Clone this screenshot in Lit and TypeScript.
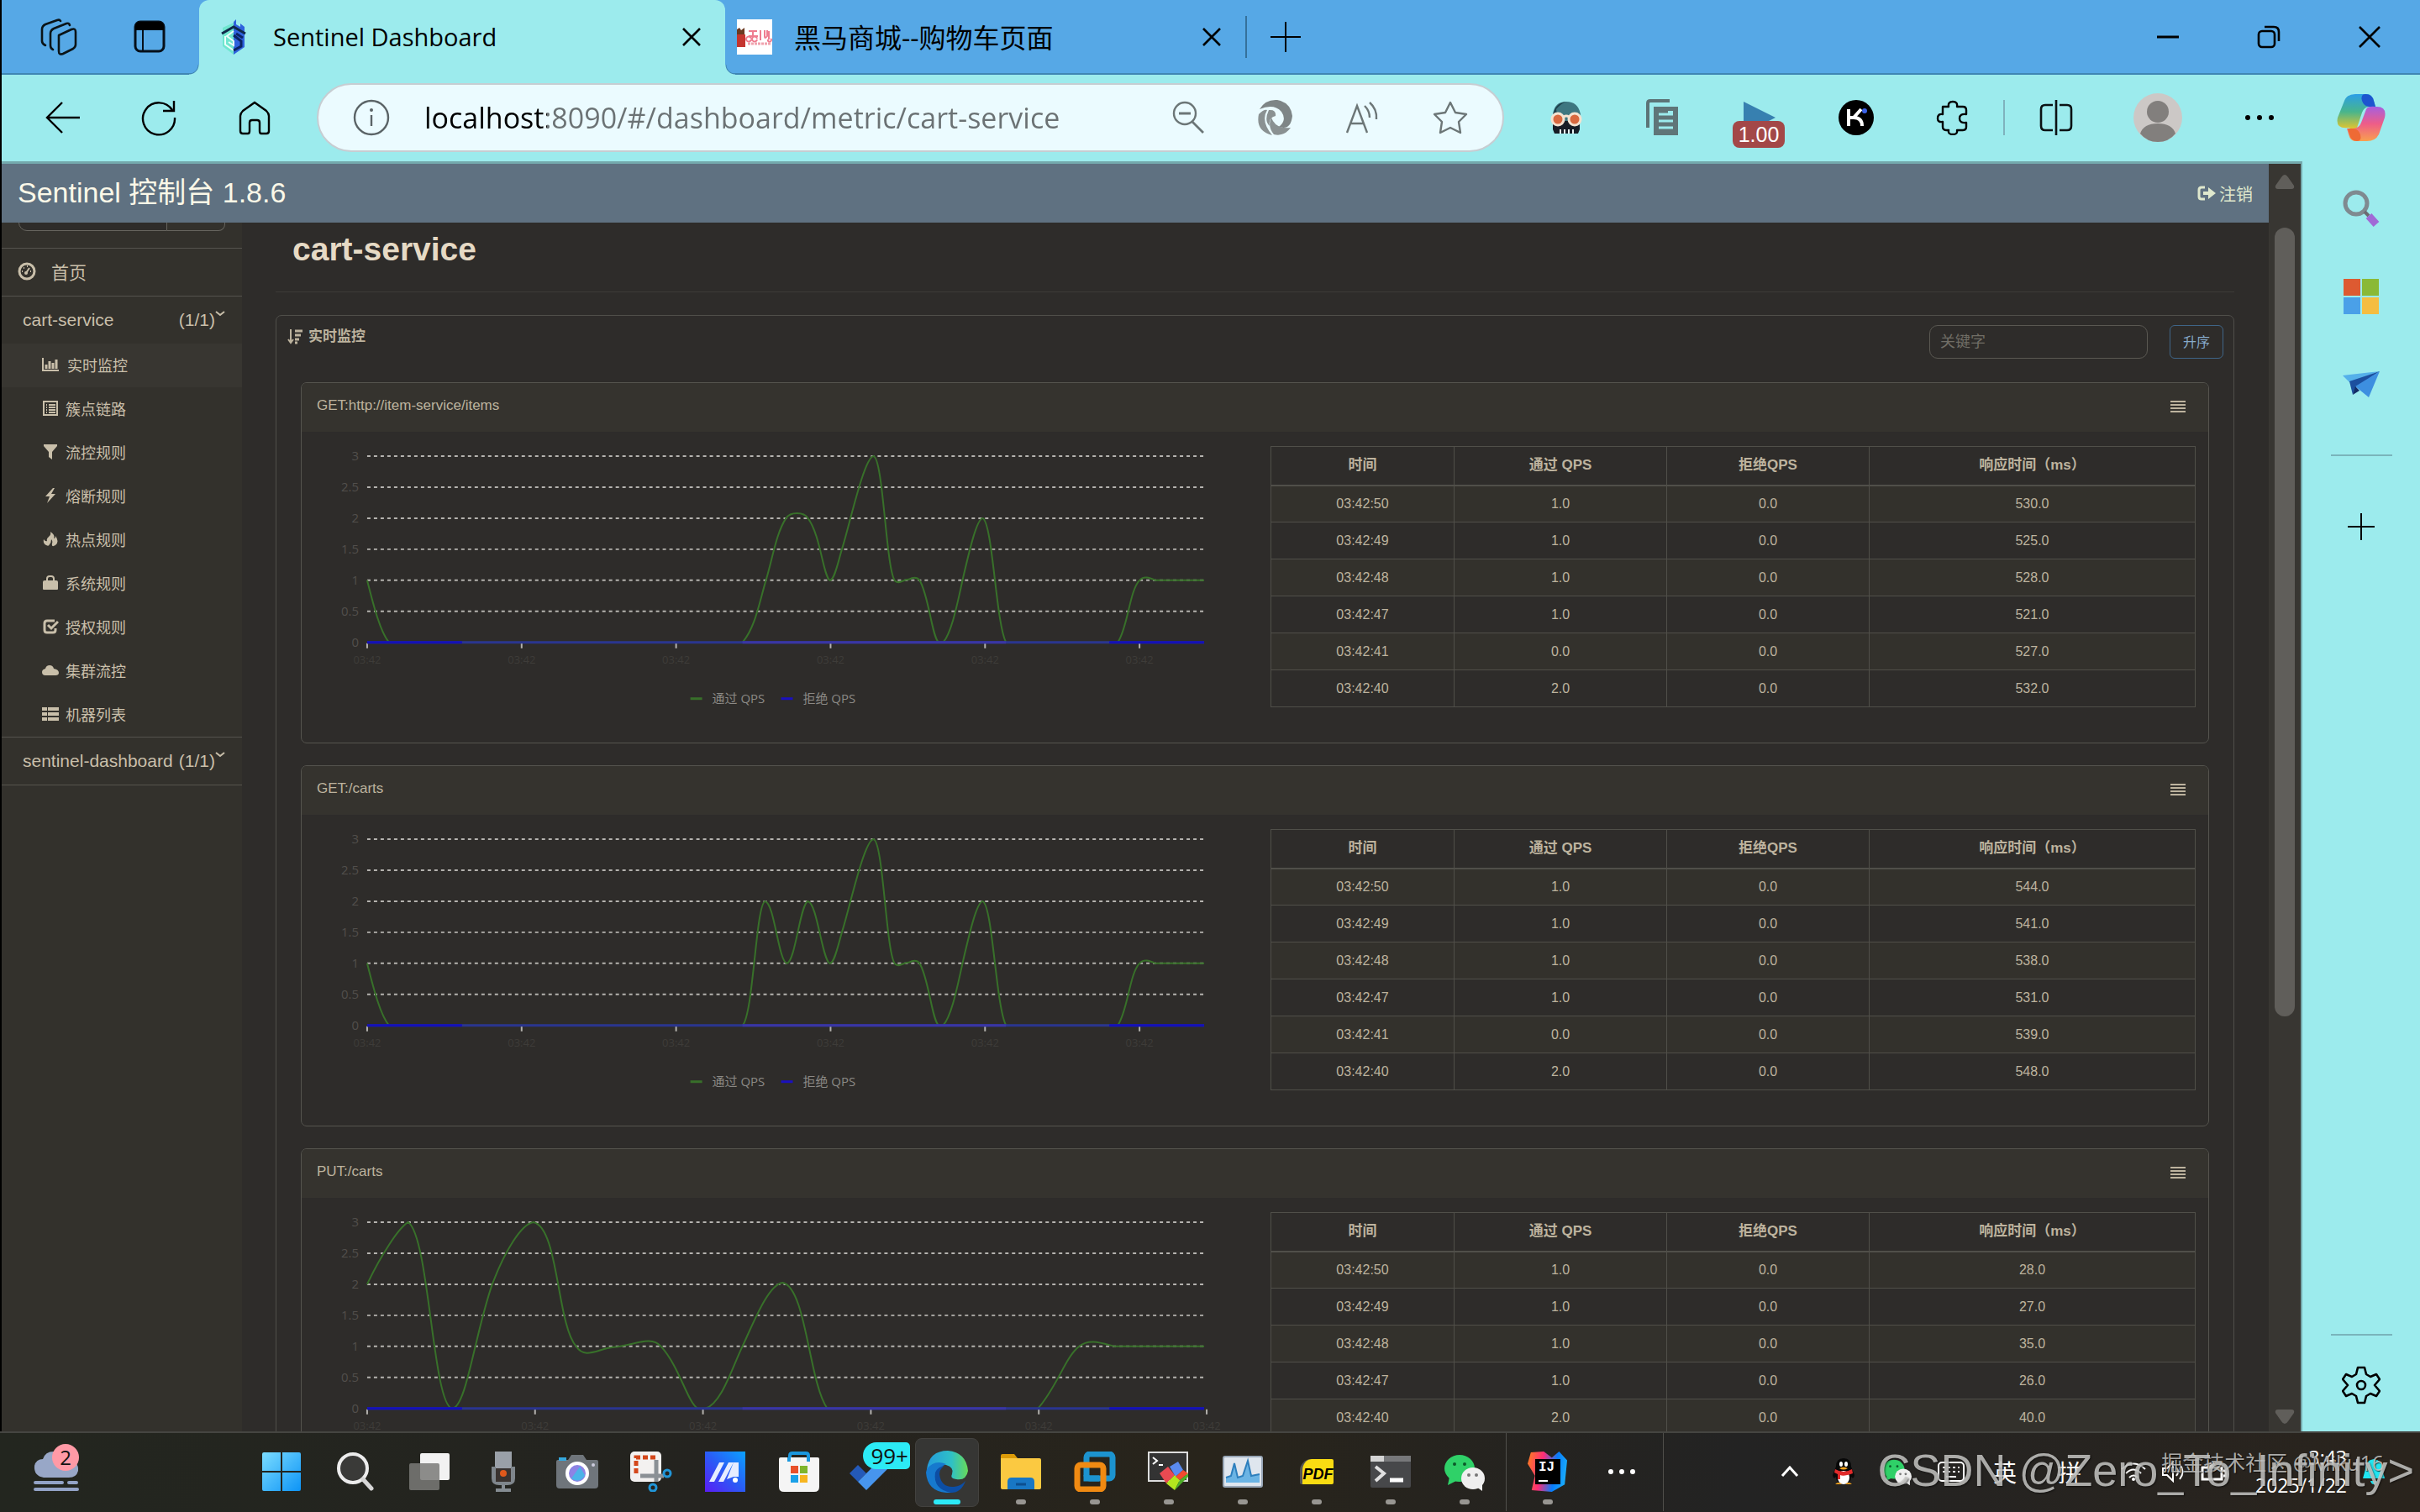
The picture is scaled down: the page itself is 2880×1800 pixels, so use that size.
import { LitElement, html, css, svg } from "lit";
import type { SVGTemplateResult } from "lit";
import { customElement, property } from "lit/decorators.js";

const pic = (w: number, h: number, body: SVGTemplateResult, vb = `0 0 ${w} ${h}`) =>
  html`<svg width=${w} height=${h} viewBox=${vb} fill="none" aria-hidden="true">${body}</svg>`;

/* ---------- browser icons ---------- */
const B = {
  workspaces: pic(44, 44, svg`<g stroke="#0b1418" stroke-width="2.6" stroke-linejoin="round" stroke-linecap="round"><path d="M22 20 L37 13 Q42 11 42 16 V31 Q42 34 39 36 L27 42 Q22 44 22 39 Z"/><path d="M15 37 Q12 36 12 32 V18 Q12 14 16 12 L31 6 Q34 5 35 8"/><path d="M6 32 Q2 30 2 27 V13 Q2 9 6 7 L20 2 Q23 1 24 3"/></g>`),
  tabs: pic(40, 40, svg`<rect x="3" y="2" width="34" height="35" rx="6" stroke="#06101a" stroke-width="3"/><path d="M3 12V8Q3 2 9 2H31Q37 2 37 8V12Z" fill="#000"/><path d="M12 12V37" stroke="#06101a" stroke-width="2"/>`),
  sentinel: pic(30, 42, svg`<path d="M15 3 L18 0 V6 L23 9 V5 L28 9 V33 L15 42Z" fill="#2f62dd"/><path d="M2 10 L15 4 V42 L2 32Z" fill="#6fe6cf"/><path d="M1 17 L15 9 L29 17" stroke="#10294a" stroke-width="3"/><path d="M5 20V30L15 37M15 14L7 20L15 26V31L9 27" stroke="#eafffb" stroke-width="2"/><path d="M15 19L24 26V32L15 37M18 17L26 22" stroke="#0c2464" stroke-width="3"/>`),
  close: pic(24, 24, svg`<path d="M2 2L22 22M22 2L2 22" stroke="#000" stroke-width="2.6"/>`),
  shop: pic(42, 42, svg`<rect width="42" height="42" fill="#fff"/><rect x="0" y="18" width="10" height="15" fill="#c5352f"/><path d="M0 12L3 10L5 13L9 10V18H0Z" fill="#6b3a22"/><path d="M14 14H24M19 14V20M14 20H25M17 23A3 3 0 1 0 17 24M24 23A3 3 0 1 0 24 24M28 13V25M33 13V20Q33 24 36 20V13M38 14V24M37 24A2 2 0 1 0 40 23" stroke="#ee7d90" stroke-width="2"/><path d="M13 29H41" stroke="#f0a2ad" stroke-width="3" stroke-dasharray="3 1"/>`),
  plus: pic(36, 36, svg`<path d="M18 0V36M0 18H36" stroke="#000" stroke-width="2"/>`),
  plusSmall: pic(32, 32, svg`<path d="M16 0V32M0 16H32" stroke="#000" stroke-width="2"/>`),
  min: pic(26, 26, svg`<path d="M0 13H26" stroke="#000" stroke-width="3"/>`),
  restore: pic(28, 28, svg`<rect x="2" y="7" width="19" height="19" rx="4" stroke="#000" stroke-width="2.6"/><path d="M9 2H20Q26 2 26 8V19" stroke="#000" stroke-width="2.6"/>`),
  winclose: pic(28, 28, svg`<path d="M2 2L26 26M26 2L2 26" stroke="#000" stroke-width="2.6"/>`),
  back: pic(44, 40, svg`<path d="M42 20H3M21 2L3 20L21 38" stroke="#000" stroke-width="2.4"/>`),
  reload: pic(44, 44, svg`<path d="M38 13A19 19 0 1 0 41 22M40 2V14H27" stroke="#000" stroke-width="2.4"/>`),
  home: pic(40, 42, svg`<path d="M3 19Q3 16 6 13L20 3L34 13Q37 16 37 19V37Q37 40 34 40H28Q26 40 26 37V27Q26 24 23 24H17Q14 24 14 27V37Q14 40 12 40H6Q3 40 3 37Z" stroke="#000" stroke-width="2.4"/>`),
  info: pic(44, 44, svg`<circle cx="22" cy="22" r="20" stroke="#5b6467" stroke-width="2.4"/><path d="M22 19V32" stroke="#5b6467" stroke-width="2.4"/><circle cx="22" cy="13" r="2" fill="#5b6467"/>`),
  zoomout: pic(40, 40, svg`<circle cx="16" cy="15" r="13" stroke="#6c7677" stroke-width="2.4"/><path d="M25 25L38 38M9 15H23" stroke="#6c7677" stroke-width="2.8"/>`),
  swirl: pic(44, 44, svg`<path d="M3 12Q10 0 24 1Q40 4 42 20Q40 38 26 33Q36 25 29 15Q20 5 3 12Z" fill="#7e8586"/><path d="M14 13Q23 12 22 20Q13 22 15 32Q8 26 14 13ZM2 18Q8 12 12 13Q4 26 18 43Q-2 38 2 18ZM17 22Q22 36 40 34Q32 45 20 42Q12 32 17 22Z" fill="#8a9192"/>`),
  read: pic(44, 40, svg`<path d="M3 38L15 6L27 38M7 27H23M24 6Q30 12 30 20M30 2Q39 10 38 22" stroke="#6c7677" stroke-width="2.4"/>`),
  star: pic(44, 42, svg`<path d="M22 3L28 15L41 17L32 26L34 39L22 33L10 39L12 26L3 17L16 15Z" stroke="#6c7677" stroke-width="2.4" stroke-linejoin="round"/>`),
  skull: pic(40, 40, svg`<path d="M4 24V16Q6 1 20 1Q34 1 37 16V24Z" fill="#3d7680"/><path d="M8 10Q14 3 20 1Q6 3 4 18V24H10Z" fill="#1c3f4a"/><path d="M4 24H36V34L34 39H6L4 34Z" fill="#171d26"/><circle cx="10" cy="22" r="7" fill="#d8693f" stroke="#f3e2d0" stroke-width="3"/><circle cx="30" cy="22" r="7" fill="#d8693f" stroke="#f3e2d0" stroke-width="3"/><path d="M17 19Q20 17 23 19" stroke="#f3e2d0" stroke-width="3"/><path d="M13 34V39M18 34V39M23 34V39M28 34V39" stroke="#e8f2f2" stroke-width="2"/>`),
  docs: pic(40, 44, svg`<path d="M2 34V5Q2 2 5 2H28" stroke="#5c7477" stroke-width="4"/><path d="M9 9H38V43H9Z" fill="#5f7578"/><path d="M15 18H32M15 26H32M15 34H32" stroke="#9cebed" stroke-width="3"/><path d="M26 14H32V18H26Z" fill="#9cebed"/>`),
  kimi: pic(42, 42, svg`<circle cx="21" cy="21" r="21" fill="#000"/><path d="M12 11V31M12 21H18Q28 21 28 31M18 21L27 11" stroke="#fff" stroke-width="4"/><circle cx="31" cy="13" r="3" fill="#3b62e8"/>`),
  puzzle: pic(40, 42, svg`<path d="M8 8H15Q14 2 20 2Q26 2 25 8H32Q36 8 36 12V17Q28 16 28 22Q28 28 36 27V32Q36 36 32 36H25Q26 41 20 41Q14 41 15 36H12Q8 36 8 32V26Q2 27 2 22Q2 16 8 17Z" stroke="#000" stroke-width="2.4" stroke-linejoin="round"/>`),
  split: pic(40, 42, svg`<path d="M16 6H7Q2 6 2 11V31Q2 36 7 36H16M24 6H33Q38 6 38 11V31Q38 36 33 36H24M20 0V42" stroke="#0b1214" stroke-width="2.6"/>`),
  avatar: pic(58, 58, svg`<circle cx="29" cy="29" r="29" fill="#ccc8c6"/><circle cx="29" cy="22" r="13" fill="#827f7d"/><path d="M8 48Q12 36 29 36Q46 36 50 48Q42 58 29 58Q16 58 8 48Z" fill="#827f7d"/>`),
  dots: pic(36, 8, svg`<circle cx="4" cy="4" r="3" fill="#000"/><circle cx="18" cy="4" r="3" fill="#000"/><circle cx="32" cy="4" r="3" fill="#000"/>`),
  copilot: pic(58, 56, svg`<defs><linearGradient id="ca" x1="0" y1="0" x2="0" y2="1"><stop stop-color="#2b9ee8"/><stop offset=".5" stop-color="#48b58c"/><stop offset="1" stop-color="#e8c52c"/></linearGradient><linearGradient id="cb" x1="0" y1="0" x2="0" y2="1"><stop stop-color="#a55fe0"/><stop offset=".5" stop-color="#ee5d88"/><stop offset="1" stop-color="#f8a04e"/></linearGradient></defs><path d="M22 0H36Q42 0 44 8L46 15H38Q32 16 30 22L24 40Q22 44 14 40Q-2 42 1 28L9 8Q12 0 22 0Z" fill="url(#ca)"/><path d="M34 0Q42 0 44 8L46 15H38Q32 14 30 8Q28 0 34 0Z" fill="#1d55cf"/><path d="M36 56H22Q16 56 14 48L12 41H20Q27 40 29 34L35 18Q37 14 46 15Q60 14 57 28L50 48Q46 56 36 56Z" fill="url(#cb)"/><path d="M24 56Q17 56 15 48L13 41H20Q26 42 28 48Q30 56 24 56Z" fill="#ee6a35"/>`),
  sidesearch: pic(44, 44, svg`<circle cx="16" cy="16" r="13" stroke="#7f8a90" stroke-width="5"/><path d="M26 26L31 31" stroke="#6c6a72" stroke-width="4"/><path d="M31 31L40 41" stroke="#a06ad6" stroke-width="9"/>`),
  ms: pic(42, 42, svg`<path d="M0 0H20V20H0Z" fill="#dd5a31"/><path d="M22 0H42V20H22Z" fill="#8ab936"/><path d="M0 22H20V42H0Z" fill="#4aa0e8"/><path d="M22 22H42V42H22Z" fill="#f5bd41"/>`),
  plane: pic(44, 32, svg`<path d="M0 5L44 0L8 13Z" fill="#55b0ea"/><path d="M8 12L44 0L15 20L12 28Z" fill="#1c4f9e"/><path d="M15 18L44 0L31 31Z" fill="#3d8fe0"/><path d="M12 28L15 18L20 23Z" fill="#132c66"/>`),
  gear: pic(46, 46, svg`<path d="M19 2H27L29 10L34 13L41 10L45 16L39 23L45 30L41 36L34 33L29 36L27 44H19L17 36L12 33L5 36L1 30L7 23L1 16L5 10L12 13L17 10Z" stroke="#000" stroke-width="2.6" stroke-linejoin="round"/><circle cx="23" cy="23" r="5" stroke="#000" stroke-width="2.6"/>`),
  up: pic(24, 18, svg`<path d="M12 1Q14 1 16 4L23 14Q24 18 20 18H4Q0 18 1 14L8 4Q10 1 12 1Z" fill="#605e5a"/>`),
  down: pic(24, 18, svg`<path d="M12 17Q14 17 16 14L23 4Q24 0 20 0H4Q0 0 1 4L8 14Q10 17 12 17Z" fill="#605e5a"/>`),
};

/* ---------- dashboard icons ---------- */
const D = {
  gauge: pic(22, 22, svg`<circle cx="11" cy="11" r="9" stroke="currentColor" stroke-width="3"/><path d="M10 13L14 7" stroke="currentColor" stroke-width="2"/><circle cx="10" cy="13" r="2" fill="currentColor"/><path d="M5 11H6M7 7H8M11 5H12M15 11H16" stroke="currentColor" stroke-width="2"/>`),
  chart: pic(20, 16, svg`<path d="M1 0V15H20" stroke="currentColor" stroke-width="2"/><path d="M5 13V8M9 13V4M13 13V6M17 13V2" stroke="currentColor" stroke-width="3"/>`),
  listalt: pic(18, 18, svg`<rect x="1" y="1" width="16" height="16" stroke="currentColor" stroke-width="2"/><path d="M4 5H5M7 5H15M4 8H5M7 8H15M4 11H5M7 11H15M4 14H5M7 14H15" stroke="currentColor" stroke-width="2"/>`),
  filter: pic(18, 18, svg`<path d="M1 0H17V2L11 9V18L7 15V9L1 2Z" fill="currentColor"/>`),
  bolt: pic(18, 18, svg`<path d="M12 0L3 10H8L5 18L15 7H10L14 0Z" fill="currentColor"/>`),
  fire: pic(18, 18, svg`<path d="M9 0Q15 4 13 8Q15 8 15 5Q20 12 15 16Q10 19 11 14Q12 11 10 9Q10 13 8 15Q7 18 4 16Q0 14 1 9Q3 12 5 11Q4 8 7 6Q10 4 9 0Z" fill="currentColor"/>`),
  bag: pic(18, 18, svg`<path d="M0 8Q0 6 2 6H16Q18 6 18 8V16Q18 17 17 17H1Q0 17 0 16Z" fill="currentColor"/><path d="M5 8V4Q5 1 8 1H10Q13 1 13 4V8" stroke="currentColor" stroke-width="2"/>`),
  check: pic(19, 18, svg`<path d="M14 2H5Q2 2 2 5V13Q2 16 5 16H12Q15 16 15 13V11" stroke="currentColor" stroke-width="3"/><path d="M6 7L10 11L18 3" stroke="currentColor" stroke-width="3"/>`),
  cloud: pic(20, 14, svg`<path d="M4 13Q0 13 0 9Q0 6 4 5Q5 1 9 1Q13 1 14 5Q20 6 20 10Q20 13 16 13Z" fill="currentColor"/>`),
  thlist: pic(20, 18, svg`<path d="M0 1H6V5H0ZM7 1H20V5H7ZM0 7H6V11H0ZM7 7H20V11H7ZM0 13H6V17H0ZM7 13H20V17H7Z" fill="currentColor"/>`),
  chevron: pic(12, 10, svg`<path d="M1 2L6 6L11 2" stroke="currentColor" stroke-width="2"/>`),
  logout: pic(22, 20, svg`<path d="M9 3H5Q2 3 2 6V14Q2 17 5 17H9" stroke="currentColor" stroke-width="3"/><path d="M7 8H13V3L22 10L13 17V12H7Z" fill="currentColor"/>`),
  sort: pic(18, 18, svg`<path d="M4 0V15M1 12L4 16L7 12" stroke="currentColor" stroke-width="2"/><path d="M9 2H18M9 7H16M9 12H14M9 16H12" stroke="currentColor" stroke-width="3"/>`),
  bars: pic(18, 14, svg`<path d="M0 1H18M0 5H18M0 9H18M0 13H18" stroke="currentColor" stroke-width="2"/>`),
};

/* ---------- taskbar icons ---------- */
const wechat = svg`<ellipse cx="18" cy="20" rx="18" ry="16" fill="#2fd168"/><path d="M6 30L4 40L14 35Z" fill="#2fd168"/><circle cx="12" cy="15" r="2" fill="#0c5a2a"/><circle cx="24" cy="15" r="2" fill="#0c5a2a"/><ellipse cx="34" cy="32" rx="14" ry="13" fill="#efefef"/><path d="M38 42L45 47L45 38Z" fill="#efefef"/><circle cx="29" cy="28" r="2" fill="#777"/><circle cx="38" cy="28" r="2" fill="#777"/>`;
const T = {
  weather: pic(54, 56, svg`<path d="M12 40Q0 38 1 26Q3 18 11 18Q14 8 26 9Q38 10 41 20Q54 20 53 32Q51 40 42 40Z" fill="#98a7c7"/><path d="M2 46H34M42 46H51M2 54H52" stroke="#93a3c6" stroke-width="4" stroke-linecap="round"/>`),
  win: pic(46, 46, svg`<defs><linearGradient id="wg" x1="0" y1="0" x2="1" y2="1"><stop stop-color="#7bdcff"/><stop offset="1" stop-color="#0d94f6"/></linearGradient></defs><path d="M0 2Q0 0 2 0H22V22H0ZM24 0H44Q46 0 46 2V22H24ZM0 24H22V46H2Q0 46 0 44ZM24 24H46V44Q46 46 44 46H24Z" fill="url(#wg)"/>`),
  search: pic(44, 46, svg`<circle cx="19" cy="19" r="17" fill="#3a3a38" stroke="#ececec" stroke-width="4"/><path d="M31 32L41 43" stroke="#d6d6d6" stroke-width="5" stroke-linecap="round"/>`),
  view: pic(48, 44, svg`<rect x="13" y="0" width="35" height="32" rx="2" fill="#f2f2f2"/><rect x="0" y="12" width="36" height="32" rx="2" fill="#7a7a78" opacity=".85"/>`),
  mic: pic(30, 48, svg`<rect x="5" y="0" width="20" height="24" fill="#9aa0a8"/><path d="M1 18H6V34H24V18H29V32Q29 40 20 40H10Q1 40 1 32Z" fill="#7f868c"/><rect x="6" y="20" width="18" height="16" fill="#3a3330"/><circle cx="15" cy="26" r="4" fill="#e0591c"/><path d="M15 40V45M6 46H24" stroke="#858c92" stroke-width="4"/>`),
  camera: pic(50, 40, svg`<path d="M0 8Q0 6 2 6H14L18 0H32L36 6H48Q50 6 50 8V36Q50 40 46 40H4Q0 40 0 36Z" fill="#6f757b"/><rect x="3" y="3" width="9" height="4" fill="#35a8dd"/><circle cx="25" cy="22" r="12" fill="#8d83e4" stroke="#fff" stroke-width="4"/><path d="M18 28A10 10 0 0 0 34 24L28 14Z" fill="#4bb3e8"/><rect x="42" y="10" width="4" height="4" rx="2" fill="#ccd"/>`),
  snip: pic(50, 48, svg`<rect width="37" height="36" rx="5" fill="#f3f1f0"/><path d="M7 26V7H30" stroke="#d4471a" stroke-width="5" stroke-dasharray="6 3"/><path d="M31 10V36M12 29H40" stroke="#8b9095" stroke-width="5"/><circle cx="44" cy="26" r="4" stroke="#2196d8" stroke-width="3"/><circle cx="27" cy="43" r="4" stroke="#2196d8" stroke-width="3"/>`),
  mi: pic(48, 48, svg`<defs><linearGradient id="mg" x1="0" y1="1" x2="1" y2="0"><stop stop-color="#5b1cf4"/><stop offset=".5" stop-color="#2a5cf6"/><stop offset="1" stop-color="#0ba2ff"/></linearGradient></defs><rect width="48" height="48" fill="url(#mg)"/><path d="M5 36L17 13H23L11 36ZM16 36L28 13H34L22 36ZM34 13H40V30H34L26 33Z" fill="#e6ecff"/><circle cx="36" cy="34" r="3" fill="#fff"/>`),
  store: pic(48, 48, svg`<path d="M13 12V5Q13 2 16 2H32Q35 2 35 5V12" stroke="#1b97dd" stroke-width="4"/><path d="M0 9Q0 7 2 7H46Q48 7 48 9V42Q48 48 42 48H6Q0 48 0 42Z" fill="#f5f5f5"/><path d="M12 7V12M35 7V12" stroke="#1b97dd" stroke-width="4"/><rect x="14" y="17" width="9" height="9" fill="#e8502a"/><rect x="25" y="17" width="9" height="9" fill="#7fb52e"/><rect x="14" y="28" width="9" height="9" fill="#1aa0e8"/><rect x="25" y="28" width="9" height="9" fill="#f7b520"/>`),
  todo: pic(56, 44, svg`<path d="M0 24L10 14L20 24L10 34Z" fill="#2459b8"/><path d="M10 34L42 2L52 12L20 44Z" fill="#4795ee"/>`),
  edge: pic(50, 50, svg`<defs><linearGradient id="eg" x1="0" y1="0" x2="1" y2="0"><stop stop-color="#239bdc"/><stop offset=".6" stop-color="#2fc0c6"/><stop offset="1" stop-color="#68da58"/></linearGradient></defs><path d="M1 22Q4 0 26 0Q48 2 50 24Q48 36 36 34Q28 33 31 28Q34 20 24 17Q10 14 1 24Z" fill="url(#eg)"/><path d="M1 22Q10 10 24 16Q14 20 15 31Q18 44 32 50Q2 52 0 26Z" fill="#1679ce"/><path d="M16 28Q18 44 33 43Q42 42 47 36Q42 50 30 50Q8 46 11 26Q14 19 22 18Q16 22 16 28Z" fill="#0d4ea4"/>`),
  folder: pic(48, 42, svg`<path d="M0 2Q0 0 2 0H16L20 5H0Z" fill="#dc9b08"/><path d="M0 5H46Q48 5 48 7V40Q48 42 46 42H2Q0 42 0 40Z" fill="#fbc941"/><path d="M8 42V33Q8 28 13 28H35Q40 28 40 33V42Z" fill="#1877c4"/><path d="M18 36H30" stroke="#0c4f8f" stroke-width="3"/>`),
  vm: pic(50, 48, svg`<rect x="15" y="3" width="31" height="29" rx="4" stroke="#1c93cf" stroke-width="7"/><rect x="4" y="16" width="31" height="29" rx="4" stroke="#f08a12" stroke-width="7"/><path d="M15 28V32H30" stroke="#1c93cf" stroke-width="7"/>`),
  moba: pic(50, 48, svg`<rect x="1" y="1" width="46" height="34" fill="#333" stroke="#ddd" stroke-width="2"/><path d="M6 7L11 11L6 15M13 16H18" stroke="#fff" stroke-width="2"/><path d="M14 26L24 18L32 28L22 38Z" fill="#e94a52"/><path d="M26 18L36 12L42 22L33 30Z" fill="#5a8bf0"/><path d="M22 38L32 28L38 34L32 46Z" fill="#b4e61e"/><path d="M33 30L42 22L48 26L38 34Z" fill="#f24a30"/><path d="M38 34L48 26V30L32 46Z" fill="#4fae28"/>`),
  monitor: pic(48, 38, svg`<rect x="1" y="1" width="46" height="36" rx="2" fill="#dfe6ee" stroke="#9aa8b8" stroke-width="2"/><path d="M4 32V26L10 24L14 9L18 26L24 24L30 6L34 24L44 22V32Z" fill="#6bb4e4"/><path d="M4 26L10 24L14 9L18 26L24 24L30 6L34 24L44 22" stroke="#2d7fbd" stroke-width="2"/>`),
  terminal: pic(48, 38, svg`<rect width="48" height="38" rx="2" fill="#47484a"/><path d="M0 0H48V7H0Z" fill="#77787a"/><path d="M0 0H16V7H0Z" fill="#d4d4d4"/><path d="M6 13L16 21L6 30" stroke="#e0e0e0" stroke-width="4"/><path d="M23 29H39" stroke="#fff" stroke-width="5"/>`),
  wechat: pic(48, 48, wechat),
  wechatSmall: pic(34, 34, wechat, "0 0 48 48"),
  dots: pic(34, 8, svg`<circle cx="4" cy="4" r="3" fill="#fff"/><circle cx="17" cy="4" r="3" fill="#fff"/><circle cx="30" cy="4" r="3" fill="#fff"/>`),
  caret: pic(22, 14, svg`<path d="M2 12L11 2L20 12" stroke="#fff" stroke-width="3"/>`),
  qq: pic(26, 32, svg`<path d="M4 10Q4 0 13 0Q22 0 22 10L26 20Q25 26 22 22Q22 30 13 30Q4 30 4 22Q1 26 0 20Z" fill="#080808"/><ellipse cx="13" cy="23" rx="7" ry="8" fill="#fff"/><path d="M3 13Q13 19 23 13L24 18Q13 22 9 20V25H6V19L2 17Z" fill="#e02a2a"/><ellipse cx="10" cy="7" rx="2" ry="3" fill="#fff"/><ellipse cx="16" cy="7" rx="2" ry="3" fill="#fff"/><path d="M8 12Q13 9 18 12Q13 15 8 12ZM3 31Q7 27 11 31ZM15 31Q19 27 23 31Z" fill="#f6a31c"/>`),
  keyboard: pic(34, 26, svg`<rect x="2" y="2" width="30" height="22" rx="4" stroke="#fff" stroke-width="2"/><path d="M7 8H27M7 13H27" stroke="#fff" stroke-width="2" stroke-dasharray="3 3"/><path d="M11 19H23" stroke="#fff" stroke-width="2"/>`),
  wifi: pic(32, 24, svg`<path d="M2 9Q16 -4 30 9M7 14Q16 5 25 14M11 19Q16 14 21 19" stroke="#fff" stroke-width="2"/><circle cx="16" cy="21" r="2" fill="#fff"/>`),
  volume: pic(28, 26, svg`<path d="M2 9H7L14 2V24L7 17H2ZM18 8Q22 13 18 18M22 4Q29 13 22 22" stroke="#fff" stroke-width="2"/>`),
  ide: pic(32, 26, svg`<path d="M2 8H25V22H2ZM27 12H30V18H27" stroke="#fff" stroke-width="3"/><path d="M12 2L18 8H6Z" fill="#fff"/>`),
  bell: pic(28, 32, svg`<path d="M14 1Q24 2 24 13L27 24H1L4 13Q4 2 14 1Z" fill="#20e6f2"/><path d="M10 27H18Q17 31 14 31Q11 31 10 27Z" fill="#20e6f2"/>`),
};

/* ---------- data ---------- */
interface Metric { name: string; path: string; tick: number; rows: string[][]; }
const times = ["03:42:50", "03:42:49", "03:42:48", "03:42:47", "03:42:41", "03:42:40"];
const pass = ["1.0", "1.0", "1.0", "1.0", "0.0", "2.0"];
const mk = (rt: string[], t = times, p = pass) => rt.map((r, i) => [t[i], p[i], "0.0", r]);
const tail = "C557 148 561 125 567 106C575 80 592 2 603 0C615 2 618 138 629 149C634 153 638 147 645 147C651 144 655 144 658 148C669 165 673 218 681 222H686C697 210 704 170 711 140C718 110 726 76 733 74C745 78 749 200 761 222H894C906 205 908 160 920 148C925 142 932 145 939 148H997";
const metrics: Metric[] = [
  { name: "GET:http://item-service/items", tick: 184, rows: mk(["530.0", "525.0", "528.0", "521.0", "527.0", "532.0"]),
    path: "M0 148C8 180 16 210 26 222H447C462 205 467 175 475 148C483 122 487 92 499 74C504 66 520 66 525 74C540 94 543 142 551 148" + tail },
  { name: "GET:/carts", tick: 184, rows: mk(["544.0", "541.0", "538.0", "531.0", "539.0", "548.0"]),
    path: "M0 148C8 180 16 210 26 222H447C460 210 463 78 474 74C485 76 490 146 500 148C510 146 516 76 525 74C536 76 542 144 551 148" + tail },
  { name: "PUT:/carts", tick: 200, rows: mk(["28.0", "27.0", "35.0", "26.0", "40.0"], ["03:42:50", "03:42:49", "03:42:48", "03:42:47", "03:42:40"], ["1.0", "1.0", "1.0", "1.0", "2.0"]),
    path: "M0 74C16 40 38 6 49 0C74 18 78 216 101 222C118 222 128 134 149 74C164 34 184 2 198 0C228 6 226 122 249 148C259 164 275 151 293 149C318 147 338 134 350 148C372 172 382 216 394 222H403C422 216 434 175 447 148C461 118 478 74 495 72C523 78 526 190 548 222H799C822 196 832 160 848 148C860 138 875 144 890 148H997" },
];
const menu: [string, unknown][] = [
  ["实时监控", D.chart], ["簇点链路", D.listalt], ["流控规则", D.filter], ["熔断规则", D.bolt], ["热点规则", D.fire],
  ["系统规则", D.bag], ["授权规则", D.check], ["集群流控", D.cloud], ["机器列表", D.thlist],
];

const reset = css`
  * { box-sizing: border-box; }
  svg { display: block; flex: none; }
  button { background: none; border: 0; padding: 0; margin: 0; font: inherit; color: inherit; display: flex; align-items: center; justify-content: center; }
  a { color: inherit; text-decoration: none; }
  input { font: inherit; min-width: 0; }
`;

@customElement("metric-card")
class MetricCard extends LitElement {
  @property({ attribute: false }) metric!: Metric;
  static styles = [reset, css`
    :host { display: block; border: 1px solid #55544e; border-radius: 7px; overflow: hidden; color: #bdb39e; min-height: 430px; background: #2e2c2a; }
    .head { display: flex; justify-content: space-between; height: 58px; padding: 0 27px 3px 18px; background: #35332e; font-size: 17px; line-height: 54px; }
    .body { display: grid; grid-template-columns: 1153fr 1101fr; padding-right: 15px; align-items: start; }
    .chart { width: 100%; height: auto; font-family: "Open Sans", "Noto Sans CJK SC", sans-serif; }
    .axis { font-size: 15px; fill: #524f4c; }
    .time { font-size: 13px; fill: #3e3c39; }
    .legend { font-size: 15px; fill: #8b8985; }
    table { width: 100%; border-collapse: collapse; table-layout: fixed; margin-top: 17px; font-size: 16px; text-align: center; }
    th, td { border: 1px solid #504f49; padding: 0; height: 44px; line-height: 22px; }
    th { font-size: 17px; border-bottom-width: 2px; height: 46px; }
    tbody tr:nth-child(odd) { background: #33312c; }
    .c1 { width: 218px; } .c2 { width: 253px; } .c3 { width: 241px; }
  `];
  render() {
    const m = this.metric;
    const ticks = [0, 1, 2, 3, 4, 5].map((i) => i * m.tick);
    return html`
      <div class="head"><span>${m.name}</span><button aria-label="菜单">${D.bars}</button></div>
      <div class="body">
        <svg class="chart" viewBox="0 0 1154 370" role="img" aria-label="QPS">
          ${[0, 1, 2, 3, 4, 5, 6].map((i) => svg`
            <text class="axis" x="68" y=${34 + i * 37} text-anchor="end">${3 - i * 0.5}</text>
            ${i < 6 ? svg`<path d="M78 ${29 + i * 37}H1075" stroke="#b5b3af" stroke-width="2" stroke-dasharray="4 4"/>` : ""}`)}
          ${ticks.map((t) => svg`<path d="M${78 + t} 252V258" stroke="#b5b3af" stroke-width="2"/><text class="time" x=${78 + t} y="276" text-anchor="middle">03:42</text>`)}
          <g transform="translate(78 29)" fill="none">
            <path d=${m.path} stroke="#38702a" stroke-width="2"/>
            <path d="M0 222H997" stroke="#2a3590" stroke-width="3"/>
            <path d="M447 222H761" stroke="#3a36a4" stroke-width="3"/>
            <path d="M0 222H113M884 222H997" stroke="#1410b8" stroke-width="3"/>
          </g>
          <path d="M463 318H477" stroke="#38702a" stroke-width="3"/>
          <text class="legend" x="489" y="323">通过 QPS</text>
          <path d="M571 318H585" stroke="#1a10c0" stroke-width="3"/>
          <text class="legend" x="597" y="323">拒绝 QPS</text>
        </svg>
        <table>
          <thead><tr><th class="c1">时间</th><th class="c2">通过 QPS</th><th class="c3">拒绝QPS</th><th>响应时间（ms）</th></tr></thead>
          <tbody>${m.rows.map((r) => html`<tr>${r.map((c) => html`<td>${c}</td>`)}</tr>`)}</tbody>
        </table>
      </div>`;
  }
}

@customElement("sentinel-page")
class SentinelPage extends LitElement {
  static styles = [reset, css`
    :host { display: flex; flex-direction: column; min-width: 0; min-height: 0; flex: 1; background: #2e2c2a; font-family: "Liberation Sans", "Noto Sans CJK SC", sans-serif; color: #c9bfaa; overflow: hidden; }
    .top { flex: none; height: 70px; background: #5f7181; display: flex; align-items: center; justify-content: space-between; padding: 0 19px 0 19px; color: #fbf8e8; }
    .brand { font-size: 34px; line-height: 40px; padding-bottom: 2px; }
    .logout { display: flex; align-items: center; gap: 4px; font-size: 20px; color: #dfe8cd; }
    .cols { flex: 1; min-height: 0; display: flex; }
    nav { flex: none; width: 286px; background: #33312c; }
    .search { display: flex; align-items: flex-end; height: 10px; margin: 0 20px 20px; overflow: hidden; }
    .search input { flex: 1; height: 40px; border: 1px solid #66645e; border-radius: 0 0 0 10px; background: #2e2c2a; }
    .search button { width: 69px; height: 40px; border: 1px solid #66645e; border-left: 0; border-radius: 0 0 8px 0; }
    .row { display: flex; align-items: center; height: 57px; border-top: 1px solid #55534d; font-size: 21px; padding: 0 20px 1px 25px; }
    .row.last { border-bottom: 1px solid #55534d; height: 58px; }
    .row.homepage { padding: 0 20px 3px 19px; gap: 18px; }
    .count { margin-left: auto; display: flex; }
    .sub { display: flex; align-items: center; gap: 8px; height: 52px; padding: 0 0 3px 48px; font-size: 18px; }
    .sub .ico { width: 20px; display: flex; justify-content: center; }
    .sub.on { background: #383631; gap: 10px; }
    main { flex: 1; min-width: 0; padding: 0 41px 0 40px; overflow: hidden; }
    h1 { margin: 0 0 27px; padding: 10px 20px 28px; font-size: 39px; line-height: 44px; color: #e6dac5; border-bottom: 1px solid #3d3b38; }
    .panel { border: 1px solid #504f4a; border-radius: 7px; padding-bottom: 26px; }
    .bar { display: flex; align-items: flex-start; padding: 11px 12px 28px 13px; }
    .label { display: flex; align-items: center; gap: 7px; font-size: 17px; line-height: 28px; font-weight: bold; flex: 1; color: #bdb39e; }
    .key { width: 260px; height: 40px; background: none; border: 1px solid #5a5852; border-radius: 10px; padding: 0 12px; font-size: 18px; color: #c9bfaa; margin-right: 26px; }
    .key::placeholder { color: #716e66; opacity: 1; }
    .asc { width: 64px; height: 40px; padding-bottom: 2px; border: 1px solid #3f6587; border-radius: 6px; color: #86aacb; font-size: 16px; }
    .cards { display: flex; flex-direction: column; gap: 26px; padding: 0 29px; }
  `];
  render() {
    return html`
      <header class="top"><span class="brand">Sentinel 控制台 1.8.6</span><a class="logout" href="#">${D.logout}注销</a></header>
      <div class="cols">
        <nav>
          <div class="search"><input aria-label="应用名"><button aria-label="搜索"></button></div>
          <a class="row homepage" href="#">${D.gauge}<span>首页</span></a>
          <a class="row" href="#"><span>cart-service</span><span class="count">(1/1)${D.chevron}</span></a>
          ${menu.map(([t, i], k) => html`<a class="sub ${k === 0 ? "on" : ""}" href="#"><span class="ico">${i}</span>${t}</a>`)}
          <a class="row last" href="#"><span>sentinel-dashboard</span><span class="count">(1/1)${D.chevron}</span></a>
        </nav>
        <main>
          <h1>cart-service</h1>
          <section class="panel">
            <div class="bar"><span class="label">${D.sort}实时监控</span><input class="key" placeholder="关键字" aria-label="关键字"><button class="asc">升序</button></div>
            <div class="cards">${metrics.map((m) => html`<metric-card .metric=${m}></metric-card>`)}</div>
          </section>
        </main>
      </div>`;
  }
}

@customElement("task-bar")
class TaskBar extends LitElement {
  static styles = [reset, css`
    :host { display: flex; align-items: center; position: relative; flex: none; height: 96px; border-top: 2px solid #454541; background: linear-gradient(90deg, #23261f, #24231f 30%, #28241b 50%, #232323 72%, #2a241d); font-family: "Open Sans", "Noto Sans CJK SC", sans-serif; color: #fff; overflow: hidden; padding-bottom: 2px; }
    .weather { position: relative; margin-left: 40px; width: 54px; padding-bottom: 10px; }
    .badge { position: absolute; background: #ff9aa6; color: #111; }
    .two { right: 0; top: 0; width: 32px; height: 32px; border-radius: 16px; font-size: 24px; line-height: 32px; text-align: center; }
    .apps { display: flex; margin-left: 197px; }
    .apps button { position: relative; width: 88px; height: 94px; }
    .apps .on::before { content: ""; position: absolute; left: 6px; top: 7px; width: 74px; height: 80px; border-radius: 8px; background: #363634; border: 1px solid #43423f; z-index: -1; }
    .apps .on { z-index: 0; }
    .run::after { content: ""; position: absolute; left: 38px; bottom: 8px; width: 12px; height: 6px; border-radius: 3px; background: #989692; }
    .on::after { content: ""; position: absolute; left: 28px; bottom: 8px; width: 32px; height: 6px; border-radius: 3px; background: #2ce9f7; }
    .count { right: 0; top: 12px; height: 32px; padding: 0 2px 0 9px; border-radius: 16px 5px 5px 16px; background: #2ceaf5; font-size: 26px; line-height: 32px; }
    .boxed { display: flex; align-items: center; border: solid #504f4b; border-width: 0 1px; margin-left: 5px; padding: 0 5px; }
    .boxed button { position: relative; width: 88px; height: 94px; }
    .pdf { width: 40px; height: 30px; background: #f9dc12; border-radius: 14px 2px 2px 2px; border-left: 3px solid #555; color: #000; font: italic bold 18px/36px "Liberation Sans", sans-serif; text-align: center; }
    .ij { width: 48px; height: 48px; display: grid; place-items: center; background: linear-gradient(100deg, #fc801d, #fe2c78 35%, #087cfa 65%, #21c0fb); clip-path: polygon(8% 2%, 40% 0, 60% 15%, 78% 0, 98% 22%, 92% 82%, 60% 100%, 10% 96%, 18% 60%, 0 30%); }
    .ij span { width: 30px; height: 30px; background: linear-gradient(#fff, #fff) 4px 25px / 11px 2px no-repeat #000; font: bold 16px/20px "Liberation Mono", monospace; padding: 0 4px; text-align: left; }
    .tray { display: flex; align-items: center; margin-left: auto; padding-right: 41px; }
    .tray button { font-size: 28px; height: 94px; }
    .w64 { width: 64px; } .w90 { width: 90px; } .w62 { width: 62px; } .w32 { width: 32px; } .w66 { width: 66px; }
    .clock { width: 125px; text-align: right; font-size: 23px; line-height: 33px; }
    .bell { margin-left: 18px; }
    .mark { position: absolute; right: 7px; top: 6px; font: 54px/76px "Liberation Sans", sans-serif; color: rgba(205, 205, 203, .82); text-shadow: 1px 1px 2px #0008; white-space: nowrap; pointer-events: none; }
    .mark2 { position: absolute; right: 43px; top: 17px; font-size: 25px; line-height: 36px; color: rgba(205, 205, 203, .82); text-shadow: 1px 1px 1px #000a; white-space: nowrap; pointer-events: none; }
  `];
  render() {
    const plain: [string, unknown][] = [["开始", T.win], ["搜索", T.search], ["任务视图", T.view], ["录音机", T.mic], ["相机", T.camera], ["截图", T.snip], ["应用", T.mi], ["商店", T.store]];
    const running: [string, unknown][] = [["文件", T.folder], ["虚拟机", T.vm], ["终端", T.moba], ["监视器", T.monitor], ["文档", html`<span class="pdf">PDF</span>`], ["命令行", T.terminal], ["微信", T.wechat]];
    return html`
      <button class="weather" aria-label="天气">${T.weather}<span class="badge two">2</span></button>
      <div class="apps">
        ${plain.map(([l, i]) => html`<button aria-label=${l}>${i}</button>`)}
        <button aria-label="待办">${T.todo}<span class="badge count">99+</span></button>
        <button class="on" aria-label="浏览器">${T.edge}</button>
        ${running.map(([l, i]) => html`<button class="run" aria-label=${l}>${i}</button>`)}
      </div>
      <div class="boxed"><button class="run" aria-label="IDE"><span class="ij"><span>IJ</span></span></button><button aria-label="更多">${T.dots}</button></div>
      <div class="tray">
        <button class="w64" aria-label="展开">${T.caret}</button>
        <button class="w64" aria-label="QQ">${T.qq}</button>
        <button class="w64" aria-label="微信">${T.wechatSmall}</button>
        <button class="w64" aria-label="键盘">${T.keyboard}</button>
        <button class="w64">英</button>
        <button class="w90">拼</button>
        <button class="w62" aria-label="网络">${T.wifi}</button>
        <button class="w32" aria-label="音量">${T.volume}</button>
        <button class="w66" aria-label="电池">${T.ide}</button>
        <div class="clock">3:43<br>2025/1/22</div>
        <button class="bell" aria-label="通知">${T.bell}</button>
      </div>
      <span class="mark2">掘金技术社区 @Miku16</span>
      <span class="mark">CSDN @Zero_To_Infinity&gt;</span>`;
  }
}

@customElement("app-root")
class AppRoot extends LitElement {
  static styles = [reset, css`
    :host { display: flex; flex-direction: column; height: 100vh; overflow: hidden; background: #9cebed; font-family: "Open Sans", "Noto Sans CJK SC", sans-serif; color: #000; }
    .window { flex: 1; min-height: 0; display: flex; flex-direction: column; border-left: 2px solid #000; }
    .tabs { flex: none; display: flex; height: 89px; background: #56a8e6; border-bottom: 2px solid #3f86b4; }
    .tools { display: flex; padding: 0 5px 0 14px; }
    .tools button { width: 108px; }
    .tab { position: relative; display: flex; align-items: center; height: 89px; width: 619px; flex: 0 1 auto; font-size: 32px; white-space: nowrap; padding: 0 28px 1px 14px; }
    .tab.active { width: 626px; background: #9cebed; border-radius: 12px 12px 0 0; font-size: 29px; padding-left: 26px; }
    .tab.active span { margin-left: 32px; }
    .tab span { margin-left: 26px; padding-bottom: 2px; flex: 1; }
    .tab.active::before, .tab.active::after { content: ""; position: absolute; bottom: 0; width: 12px; height: 12px; }
    .tab.active::before { right: 100%; background: radial-gradient(circle at 0 0, transparent 10px, #3f86b4 11px, #9cebed 12px); }
    .tab.active::after { left: 100%; background: radial-gradient(circle at 100% 0, transparent 10px, #3f86b4 11px, #9cebed 12px); }
    .newtab { width: 94px; border-left: 2px solid #35719b; height: 50px; align-self: center; }
    .winbtns { display: flex; margin-left: auto; }
    .winbtns button { width: 120px; }
    .toolbar { flex: none; display: flex; align-items: center; height: 103px; padding: 0 10px 1px 16px; }
    .nav { width: 114px; height: 80px; }
    .omni { flex: 1; display: flex; align-items: center; height: 82px; margin: 0 16px 0 17px; border: 2px solid #c7cdd2; border-radius: 41px; background: #ebfbff; padding-right: 10px; }
    .site { width: 126px; }
    .url { flex: 1; border: 0; padding: 0; height: 60px; outline: 0; font-size: 34px; color: transparent; background: linear-gradient(90deg, #000 146px, #6b7274 146px); -webkit-background-clip: text; background-clip: text; }
    .omni .act { width: 104px; }
    .ext { position: relative; width: 115px; height: 80px; }
    .play { width: 0; height: 0; border: solid transparent; border-width: 19px 0 19px 38px; border-left-color: #3780b0; }
    .speed { position: absolute; left: 26px; top: 44px; width: 62px; height: 32px; border-radius: 8px; background: #a34848; color: #fff; font: 25px/32px "Liberation Sans", sans-serif; text-align: center; }
    .sep { width: 2px; height: 42px; margin-left: 3px; background: #7fb2bd; }
    .app { width: 121px; height: 80px; }
    .content { flex: 1; min-height: 0; display: flex; }
    .view { flex: 1; min-width: 0; display: flex; border-top: 3px solid #74a9ad; border-right: 2px solid #74a9ad; }
    .scroll { flex: none; width: 38px; background: #383632; display: flex; flex-direction: column; align-items: center; padding: 12px 0 8px; }
    .thumb { flex: 0 1 939px; width: 24px; border-radius: 12px; background: #605e5a; margin: 46px 0 auto; }
    .side { flex: none; width: 140px; display: flex; flex-direction: column; align-items: center; padding: 3px 0 14px; }
    .side button { height: 105px; width: 100px; }
    .side .rule { width: 73px; height: 2px; background: #7ab4bb; }
    .side .upper { margin: 31px 0; }
    .side .lower { margin: auto 0 18px; }
    .side .settings { height: 82px; }
  `];
  render() {
    return html`
      <div class="window">
        <div class="tabs">
          <div class="tools"><button aria-label="工作区">${B.workspaces}</button><button aria-label="标签页">${B.tabs}</button></div>
          <div class="tab active">${B.sentinel}<span>Sentinel Dashboard</span><button aria-label="关闭">${B.close}</button></div>
          <div class="tab">${B.shop}<span>黑马商城--购物车页面</span><button aria-label="关闭">${B.close}</button></div>
          <button class="newtab" aria-label="新标签页">${B.plus}</button>
          <div class="winbtns"><button aria-label="最小化">${B.min}</button><button aria-label="还原">${B.restore}</button><button aria-label="关闭窗口">${B.winclose}</button></div>
        </div>
        <div class="toolbar">
          <button class="nav" aria-label="后退">${B.back}</button>
          <button class="nav" aria-label="刷新">${B.reload}</button>
          <button class="nav" aria-label="主页">${B.home}</button>
          <div class="omni">
            <button class="site" aria-label="网站信息">${B.info}</button>
            <input class="url" aria-label="地址" .value=${"localhost:8090/#/dashboard/metric/cart-service"}>
            <button class="act" aria-label="缩放">${B.zoomout}</button>
            <button class="act" aria-label="扩展">${B.swirl}</button>
            <button class="act" aria-label="朗读">${B.read}</button>
            <button class="act" aria-label="收藏">${B.star}</button>
          </div>
          <button class="ext" aria-label="扩展">${B.skull}</button>
          <button class="ext" aria-label="复制">${B.docs}</button>
          <button class="ext" aria-label="速度"><span class="play"></span><span class="speed">1.00</span></button>
          <button class="ext" aria-label="Kimi">${B.kimi}</button>
          <button class="ext" aria-label="扩展管理">${B.puzzle}</button>
          <span class="sep"></span>
          <button class="app" aria-label="分屏">${B.split}</button>
          <button class="app" aria-label="个人资料">${B.avatar}</button>
          <button class="app" aria-label="设置及其他">${B.dots}</button>
          <button class="app" aria-label="Copilot">${B.copilot}</button>
        </div>
        <div class="content">
          <div class="view">
            <sentinel-page></sentinel-page>
            <div class="scroll">${B.up}<div class="thumb"></div>${B.down}</div>
          </div>
          <aside class="side">
            <button aria-label="搜索">${B.sidesearch}</button>
            <button aria-label="Microsoft 365">${B.ms}</button>
            <button aria-label="发送">${B.plane}</button>
            <span class="rule upper"></span>
            <button aria-label="添加">${B.plusSmall}</button>
            <span class="rule lower"></span>
            <button class="settings" aria-label="设置">${B.gear}</button>
          </aside>
        </div>
      </div>
      <task-bar></task-bar>`;
  }
}
